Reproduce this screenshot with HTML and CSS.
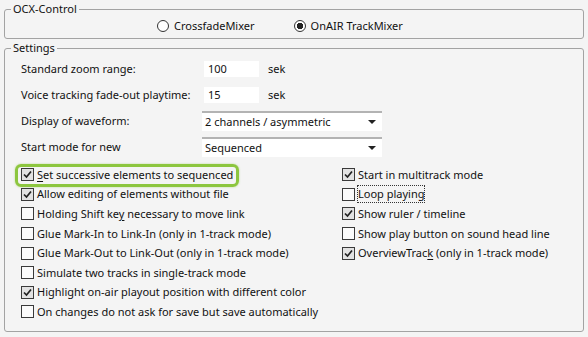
FILE: index.html
```html
<!DOCTYPE html>
<html>
  <head>
    <link rel="stylesheet" href="styles.css">
  </head>
  <body>
    <!-- mixer choice -->
    <fieldset class="group">
      <legend>OCX-Control</legend>
      <div class="radios">
        <label class="radio"><span class="dot"></span>CrossfadeMixer</label>
        <label class="radio on"><span class="dot"></span>OnAIR TrackMixer</label>
      </div>
    </fieldset>

    <fieldset class="group settings">
      <legend>Settings</legend>
      <div class="fields">
        <div class="row">
          <span class="name">Standard zoom range:</span>
          <input class="num" type="text" value="100">
          <span class="unit">sek</span>
        </div>
        <div class="row">
          <span class="name">Voice tracking fade-out playtime:</span>
          <input class="num" type="text" value="15">
          <span class="unit">sek</span>
        </div>
        <div class="row">
          <span class="name">Display of waveform:</span>
          <div class="combo">2 channels / asymmetric<span class="arrow"></span></div>
        </div>
        <div class="row">
          <span class="name">Start mode for new</span>
          <div class="combo">Sequenced<span class="arrow"></span></div>
        </div>
      </div>

      <div class="checks">
        <div class="col left">
          <label class="check on marked"><span class="box"></span><span><u>S</u>et successive elements to sequenced</span></label>
          <label class="check on"><span class="box"></span><span>Allow editing of elements without file</span></label>
          <label class="check"><span class="box"></span><span>Holding Shift ke<u>y</u> necessary to move link</span></label>
          <label class="check"><span class="box"></span><span>Glue Mark-In to Link-In (only in 1-track mode)</span></label>
          <label class="check"><span class="box"></span><span>Glue Mark-Out to Link-Out (only in 1-track mode)</span></label>
          <label class="check"><span class="box"></span><span>Simulate two tracks in single-track mode</span></label>
          <label class="check on"><span class="box"></span><span>Highlight on-air playout position with different color</span></label>
          <label class="check"><span class="box"></span><span>On changes do not ask for save but save automatically</span></label>
        </div>
        <div class="col">
          <label class="check on"><span class="box"></span><span>Start in multitrack mode</span></label>
          <label class="check"><span class="box"></span><span class="focus">Loop playing</span></label>
          <label class="check on"><span class="box"></span><span>Show ruler / timeline</span></label>
          <label class="check"><span class="box"></span><span>Show play button on sound head line</span></label>
          <label class="check on"><span class="box"></span><span>OverviewTrac<u>k</u> (only in 1-track mode)</span></label>
        </div>
      </div>
    </fieldset>
  </body>
</html>
```

FILE: styles.css
```css
body {
  margin: 0;
  background: #f4f4f4;
  font-family: "Noto Sans", "Open Sans", sans-serif;
  font-size: 11px;
  line-height: 16px;
  color: #111;
}
.group {
  margin: 1px 4px 0 4px;
  padding: 0 6px;
  border: 1px solid #a3a3a3;
  border-radius: 3px;
}
legend {
  padding: 0 2px;
  line-height: 16px;
}
.radios {
  display: flex;
  gap: 39px;
  padding: 1px 0 4px 146px;
}
.radio {
  display: flex;
  align-items: center;
  gap: 5px;
  height: 16px;
}
.dot {
  box-sizing: border-box;
  width: 12px;
  height: 12px;
  border: 1px solid #333;
  border-radius: 50%;
  background: #fff;
}
.radio.on .dot {
  background: radial-gradient(circle, #222 0 3px, #fff 3.5px);
}
.settings {
  padding-bottom: 9px;
}
.fields {
  padding-left: 10px;
}
.row {
  display: flex;
  align-items: center;
  height: 26px;
}
.name {
  width: 183px;
}
.num {
  box-sizing: border-box;
  width: 55px;
  height: 16px;
  margin: 0;
  padding: 0 0 0 4px;
  border: none;
  background: #fff;
  font: inherit;
  color: inherit;
}
.unit {
  margin-left: 9px;
}
.combo {
  box-sizing: border-box;
  display: flex;
  align-items: center;
  justify-content: space-between;
  width: 180px;
  height: 20px;
  margin-left: -2px;
  padding: 0 6px 0 3px;
  border-top: 2px solid #b3b3b3;
  background: #fff;
}
.arrow {
  width: 0;
  height: 0;
  border-left: 4px solid transparent;
  border-right: 4px solid transparent;
  border-top: 4px solid #222;
}
.checks {
  display: flex;
  margin-top: 5px;
  padding-left: 10px;
}
.col {
  display: flex;
  flex-direction: column;
}
.col.left {
  width: 321px;
}
.check {
  position: relative;
  display: flex;
  align-items: center;
  gap: 3px;
  height: 19.6px;
  white-space: nowrap;
}
.box {
  box-sizing: border-box;
  width: 13px;
  height: 13px;
  border: 1px solid #3a3a3a;
  background: #fbfbfb;
}
.check.on .box {
  background: #e2e2e2 url("data:image/svg+xml,%3Csvg xmlns='http://www.w3.org/2000/svg' width='11' height='11'%3E%3Cpath d='M2 5.5 L4.5 8 L9 2.5' fill='none' stroke='%23222' stroke-width='1.7'/%3E%3C/svg%3E") center no-repeat;
}
.focus {
  outline: 1px dotted #333;
  outline-offset: 0;
}
u {
  text-underline-offset: 2px;
}
.marked::after {
  content: "";
  position: absolute;
  box-sizing: border-box;
  left: -6px;
  top: -1px;
  width: 224px;
  height: 23px;
  border: 3px solid #8dc63f;
  border-radius: 6px;
  box-shadow: 0 0 2px rgba(141, 198, 63, 0.6);
}
```
